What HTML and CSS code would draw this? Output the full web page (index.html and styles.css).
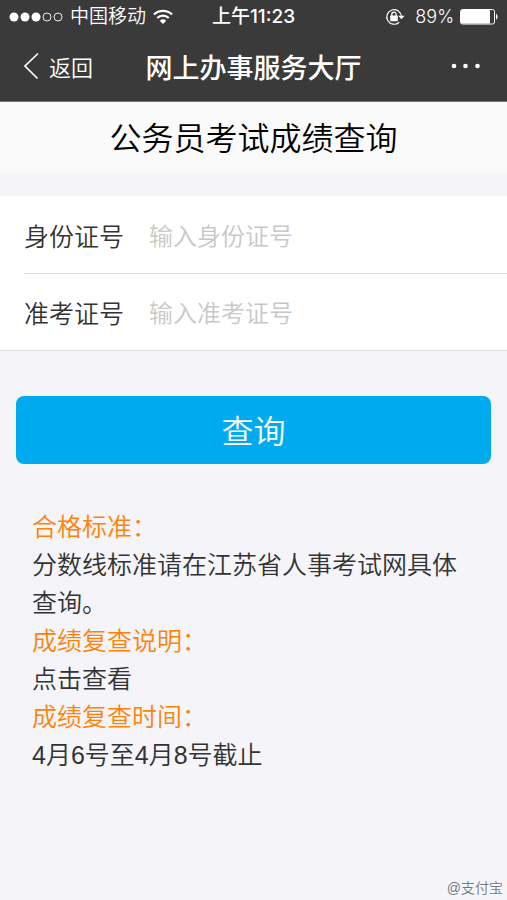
FILE: index.html
```html
<!DOCTYPE html>
<html lang="zh-CN">
<head>
<meta charset="utf-8">
<meta name="viewport" content="width=device-width, initial-scale=1">
<title>网上办事服务大厅</title>
<link rel="stylesheet" href="styles.css">
</head>
<body>
<header class="top">
  <div class="status">
    <div class="status-left">
      <svg class="signal" width="54" height="12" viewBox="0 0 54 12" aria-hidden="true">
        <g fill="#fff"><circle cx="5" cy="6" r="4.5"/><circle cx="16" cy="6" r="4.5"/><circle cx="27" cy="6" r="4.5"/></g>
        <g fill="none" stroke="#fff" stroke-width="0.9"><circle cx="38" cy="6" r="4"/><circle cx="49" cy="6" r="4"/></g>
      </svg>
      <span class="carrier">中国移动</span>
      <svg width="20" height="16" viewBox="0 0 20 16" aria-hidden="true">
        <g fill="none" stroke="#fff" stroke-width="2.2"><path d="M1 5.4a13 13 0 0 1 18 0"/><path d="M4.2 9a8.4 8.4 0 0 1 11.6 0"/></g>
        <path d="M6.8 11.7a4.8 4.8 0 0 1 6.4 0L10 15z" fill="#fff"/>
      </svg>
    </div>
    <span class="clock">上午11:23</span>
    <div class="status-right">
      <svg class="lock" width="20" height="18" viewBox="0 0 20 18" aria-hidden="true">
        <path d="M14.2 14.2A7.3 7.3 0 1 1 16.4 8.5" fill="none" stroke="#fff" stroke-width="1.2"/>
        <path d="M13.2 7.8h6.4l-3.200 3.400z" fill="#fff"/>
        <rect x="5.2" y="7.6" width="7.600" height="5.600" rx=".6" fill="#fff"/>
        <path d="M6.800 8V6.400a2.200 2.200 0 0 1 4.400 0V8" fill="none" stroke="#fff" stroke-width="1.3"/>
      </svg>
      <span class="percent">89%</span>
      <svg width="38" height="16" viewBox="0 0 38 16" aria-hidden="true">
        <rect x=".5" y=".5" width="34" height="14.5" rx="2" fill="none" stroke="#fff"/>
        <rect x="1" y="1" width="29" height="13.5" rx="1" fill="#fff"/>
        <path d="M36 5c2 .5 2 5 0 5.500z" fill="#fff"/>
      </svg>
    </div>
  </div>
  <nav class="nav">
    <a class="back" href="#">
      <svg width="16" height="28" viewBox="0 0 16 28" aria-hidden="true"><path d="M14 1.5 1 14 13.5 26.5" fill="none" stroke="#fff" stroke-width="1.6"/></svg>
      返回
    </a>
    <div class="nav-title">网上办事服务大厅</div>
    <button class="more" type="button" aria-label="更多">
      <svg width="32" height="6" viewBox="0 0 32 6" aria-hidden="true"><g fill="#fff"><circle cx="3" cy="3" r="2.300"/><circle cx="14.500" cy="3" r="2.300"/><circle cx="26.500" cy="3" r="2.300"/></g></svg>
    </button>
  </nav>
</header>
<main>
  <h1 class="heading">公务员考试成绩查询</h1>
  <form class="query">
    <div class="fields">
      <div class="field">
        <label for="idcard">身份证号</label>
        <input id="idcard" type="text" placeholder="输入身份证号">
      </div>
      <div class="field">
        <label for="ticket">准考证号</label>
        <input id="ticket" type="text" placeholder="输入准考证号">
      </div>
    </div>
    <button class="submit" type="submit">查询</button>
  </form>
  <section class="notes">
    <h2>合格标准：</h2>
    <p>分数线标准请在江苏省人事考试网具体查询。</p>
    <h2>成绩复查说明：</h2>
    <p><a href="#">点击查看</a></p>
    <h2>成绩复查时间：</h2>
    <p>4月6号至4月8号截止</p>
  </section>
</main>
<footer class="mark">@支付宝</footer>
</body>
</html>
```

FILE: styles.css
```css
* {
  box-sizing: border-box;
}

body {
  margin: 0;
  min-height: 100vh;
  display: flex;
  flex-direction: column;
  background: #f4f4f9;
  color: #333;
  font-family: "Liberation Sans", "Noto Sans CJK SC", sans-serif;
  font-weight: 350;
}

button,
input {
  font-family: inherit;
  font-weight: inherit;
}

svg {
  display: block;
}

a {
  color: inherit;
  text-decoration: none;
}

.top {
  background: #3a3a3a;
  border-bottom: 1px solid #777;
  color: #fff;
}

.status {
  display: grid;
  grid-template-columns: 1fr auto 1fr;
  align-items: center;
  height: 33px;
  padding: 0 9px;
  font-family: Inter, "Noto Sans CJK SC", sans-serif;
  font-size: 19px;
  line-height: 32px;
}

.status-left,
.status-right {
  display: flex;
  align-items: center;
  gap: 6px;
}

.status-left {
  gap: 7px;
}

.status-right {
  justify-content: flex-end;
}

.lock {
  margin-right: 4px;
}

.clock {
  font-weight: 500;
}

.percent {
  font-size: 18px;
}

.nav {
  display: grid;
  grid-template-columns: 1fr auto 1fr;
  align-items: center;
  height: 68px;
  padding: 0 24px 2px;
}

.back {
  display: flex;
  align-items: center;
  gap: 9px;
  font-size: 22px;
}

.nav-title {
  font-size: 27px;
  font-weight: 500;
}

.more {
  justify-self: end;
  padding: 8px 0;
  border: 0;
  background: none;
}

.heading {
  margin: 0 0 22px;
  padding-top: 2px;
  background: #fafafa;
  color: #000;
  font-size: 32px;
  font-weight: inherit;
  line-height: 70px;
  text-align: center;
}

.fields {
  padding-left: 24px;
  background: #fff;
  border-bottom: 1px solid #e0e0e0;
}

.field {
  display: flex;
  align-items: center;
  gap: 25px;
  height: 77px;
  font-size: 25px;
}

.field + .field {
  border-top: 1px solid #ddd;
}

.field input {
  flex: 1;
  min-width: 0;
  height: 48px;
  padding: 4px 0 0;
  border: 0;
  outline: 0;
  background: none;
  color: #333;
  font-size: 24px;
}

.field input::placeholder {
  color: #c8c8c8;
}

.query {
  display: flex;
  flex-direction: column;
}

.submit {
  height: 68px;
  margin: 45px 16px 0;
  padding: 0 0 2px;
  border: 0;
  border-radius: 8px;
  background: #00aaef;
  color: #fff;
  font-size: 32px;
}

.notes {
  padding: 44px 32px 0;
  font-size: 25px;
  line-height: 38px;
}

.notes h2 {
  margin: 0;
  color: #ff8208;
  font-size: inherit;
  font-weight: inherit;
}

.notes p {
  margin: 0;
}

.mark {
  margin-top: auto;
  padding: 0 4px 2px;
  color: #777;
  font-size: 14px;
  line-height: 20px;
  text-align: right;
  text-shadow: 1px 1px 0 #fff;
}
```
